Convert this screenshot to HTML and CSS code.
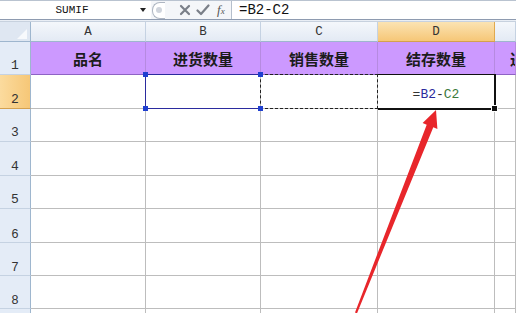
FILE: index.html
```html
<!DOCTYPE html>
<html lang="zh">
<head>
  <meta charset="UTF-8">
  <title>SUMIF</title>
  <link rel="stylesheet" href="styles.css">
</head>
<body>
  <div class="formula-bar">
    <div class="name-box">
      <span class="name">SUMIF</span>
      <span class="drop"></span>
    </div>
    <div class="bar-tools">
      <span class="pill"><span class="dot"></span></span>
      <svg class="tool" width="12" height="12" viewBox="0 0 12 12"><path d="M2 2 L10 10 M10 2 L2 10" stroke="#7a7f88" stroke-width="2.2" stroke-linecap="round"/></svg>
      <svg class="tool" width="14" height="12" viewBox="0 0 14 12"><path d="M1.5 6.5 L5 10 L12.5 1.5" fill="none" stroke="#7a7f88" stroke-width="2.2" stroke-linecap="round" stroke-linejoin="round"/></svg>
      <span class="fx">f<small>x</small></span>
    </div>
    <div class="formula-input">=B2-C2</div>
  </div>
  <div class="gap"></div>

  <div class="sheet">
    <div class="corner"><span class="tri"></span></div>
    <div class="colhead">A</div>
    <div class="colhead">B</div>
    <div class="colhead">C</div>
    <div class="colhead active">D</div>
    <div class="colhead"></div>

    <div class="rowhead">1</div>
    <div class="cell title">品名</div>
    <div class="cell title">进货数量</div>
    <div class="cell title">销售数量</div>
    <div class="cell title">结存数量</div>
    <div class="cell title clip">进</div>

    <div class="rowhead active">2</div>
    <div class="cell"></div>
    <div class="cell pick">
      <span class="frame"></span>
      <span class="handle tl"></span><span class="handle tr"></span>
      <span class="handle bl"></span><span class="handle br"></span>
    </div>
    <div class="cell copy"><span class="ants"></span></div>
    <div class="cell current">
      <span class="formula">=<b class="ref-b">B2</b>-<b class="ref-c">C2</b></span>
      <span class="thick"></span><span class="fill"></span>
    </div>
    <div class="cell"></div>

    <div class="rowhead">3</div><div class="cell"></div><div class="cell"></div><div class="cell"></div><div class="cell"></div><div class="cell"></div>
    <div class="rowhead">4</div><div class="cell"></div><div class="cell"></div><div class="cell"></div><div class="cell"></div><div class="cell"></div>
    <div class="rowhead">5</div><div class="cell"></div><div class="cell"></div><div class="cell"></div><div class="cell"></div><div class="cell"></div>
    <div class="rowhead sans">6</div><div class="cell"></div><div class="cell"></div><div class="cell"></div><div class="cell"></div><div class="cell"></div>
    <div class="rowhead sans">7</div><div class="cell"></div><div class="cell"></div><div class="cell"></div><div class="cell"></div><div class="cell"></div>
    <div class="rowhead sans">8</div><div class="cell"></div><div class="cell"></div><div class="cell"></div><div class="cell"></div><div class="cell"></div>
    <div class="rowhead"></div><div class="cell"></div><div class="cell"></div><div class="cell"></div><div class="cell"></div><div class="cell"></div>
  </div>

  <svg class="arrow" width="516" height="313" viewBox="0 0 516 313">
    <polygon fill="#e8262b" points="436,110 437.4,128.9 433.3,127.3 357,313.4 355,312.6 426.7,124.7 422.6,123.1"/>
  </svg>
</body>
</html>
```

FILE: styles.css
```css
html, body { margin: 0; padding: 0; }
body { width: 516px; height: 313px; overflow: hidden; background: #fff; position: relative; font-family: "Liberation Sans", sans-serif; color: #222; }

/* formula bar */
.formula-bar { display: flex; height: 18px; border-top: 1px solid #b9c3d0; border-bottom: 1px solid #8e9bb0; background: #fff; }
.name-box { width: 151px; display: flex; align-items: center; position: relative; }
.name { flex: 1; text-align: center; font-family: "Liberation Mono", monospace; font-size: 11px; color: #111; padding-left: 4px; }
.drop { width: 0; height: 0; border-left: 3.5px solid transparent; border-right: 3.5px solid transparent; border-top: 4px solid #222; margin-right: 5px; }
.bar-tools { width: 80px; display: flex; align-items: center; gap: 5px; background: #f4f6f9; border-right: 1px solid #b5bfcc; }
.pill { width: 12px; height: 15px; border: 1px solid #aeb6c2; border-right: none; border-radius: 8px 0 0 8px; display: flex; align-items: center; justify-content: center; background: #fff; margin-left: 1px; margin-right: 9px; }
.dot { width: 6px; height: 6px; border-radius: 50%; background: #cfd4dc; }
.tool { display: block; }
.fx { font-family: "Liberation Serif", serif; font-style: italic; font-size: 13px; color: #555; margin-left: 2px; }
.fx small { font-size: 9px; }
.formula-input { flex: 1; font-family: "Liberation Mono", monospace; font-size: 14px; color: #111; padding-left: 7px; line-height: 18px; }
.gap { height: 1px; background: #e9eef5; border-bottom: 1px solid #c7d1de; }

/* sheet grid */
.sheet { display: grid; grid-template-columns: 31px 115px 115px 117px 117px 21px; grid-template-rows: 20px 33px 34px 33px 34px 33px 34px 33px 33px 5px; }
.sheet > div { box-sizing: border-box; border-right: 1px solid #bdbdbd; border-bottom: 1px solid #bdbdbd; position: relative; }

.corner { background: #dfe7f2; border-right-color: #9eb6ce !important; border-bottom-color: #9eb6ce !important; }
.tri { position: absolute; right: 3px; bottom: 2px; width: 0; height: 0; border-left: 10px solid transparent; border-bottom: 10px solid #f7f9fc; }

.colhead { background: linear-gradient(#f4f7fb, #e3eaf4); border-right-color: #c5d2e2 !important; border-bottom-color: #9eb6ce !important; font-family: "Liberation Mono", monospace; font-size: 12.5px; text-align: center; line-height: 20px; color: #333; }
.colhead.active { background: linear-gradient(#fbe3b3, #f6c777); border-right-color: #e0a94f !important; border-bottom-color: #d4a14f !important; }

.rowhead { background: #e4ecf7; border-right-color: #9eb6ce !important; border-bottom-color: #c5d2e2 !important; font-family: "Liberation Mono", monospace; font-size: 13px; color: #333; display: flex; align-items: flex-end; justify-content: center; padding-bottom: 1px; }
.rowhead.sans { font-family: "Liberation Sans", sans-serif; font-size: 12.5px; }
.rowhead.active { background: linear-gradient(90deg, #fbdb9e, #f6c777); border-bottom-color: #d4a14f !important; }

.cell.title { background: #cc99ff; border-right-color: #b68ae0; border-bottom-color: #8e63c4; font-family: "Noto Sans CJK SC", sans-serif; font-weight: bold; font-size: 15px; color: #1c1c1c; display: flex; align-items: center; justify-content: center; overflow: hidden; }
.cell.clip { justify-content: flex-start; padding-left: 15px; }

/* selections */
.frame { position: absolute; top: -1px; left: -1px; right: 0; bottom: -1px; border: 1px solid #2b2b9e; border-right: none; }
.handle { position: absolute; width: 5px; height: 5px; background: #1f3fd0; z-index: 2; }
.handle.tl { top: -3px; left: -3px; }
.handle.tr { top: -3px; right: -3px; }
.handle.bl { bottom: -3px; left: -3px; }
.handle.br { bottom: -3px; right: -3px; }
.ants { position: absolute; top: -1px; left: -1px; right: -1px; bottom: -1px; border: 1px dashed #222; z-index: 1; }

.current { display: flex; align-items: flex-end; justify-content: center; padding-bottom: 6px; }
.formula { font-family: "Liberation Mono", monospace; font-size: 13px; color: #333; }
.formula b { font-weight: normal; }
.ref-b { color: #2a2a9c; }
.ref-c { color: #3c7a3c; }
.thick { position: absolute; top: -1px; left: 0; right: -2px; bottom: -2px; border: 2px solid #111; border-left: none; border-top-width: 1px; }
.fill { position: absolute; right: -4px; bottom: -4px; width: 5px; height: 5px; background: #111; border: 1px solid #fff; z-index: 2; }

.arrow { position: absolute; top: 0; left: 0; pointer-events: none; z-index: 3; }
```
